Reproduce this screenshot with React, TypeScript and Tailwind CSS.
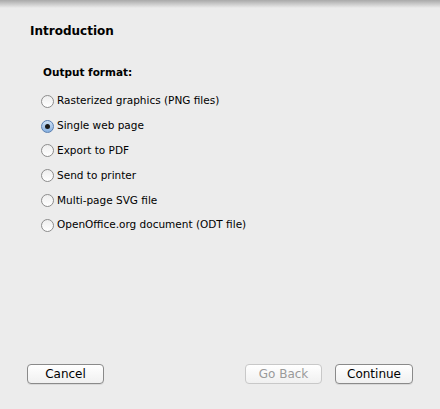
import React, { useState } from 'react';

const OPTIONS = [
  'Rasterized graphics (PNG files)',
  'Single web page',
  'Export to PDF',
  'Send to printer',
  'Multi-page SVG file',
  'OpenOffice.org document (ODT file)',
];

const Radio: React.FC<{ checked: boolean }> = ({ checked }) => (
  <span
    className={
      'w-[13px] h-[13px] rounded-full border flex items-center justify-center shrink-0 ' +
      (checked
        ? 'border-[#5a7fb0] bg-gradient-to-b from-[#cfe1f5] to-[#86b0e0]'
        : 'border-[#8c8c8c] bg-gradient-to-b from-[#eeeeee] to-[#ffffff]')
    }
  >
    {checked && <span className="w-[5px] h-[5px] rounded-full bg-[#1a1a1a]" />}
  </span>
);

const Button: React.FC<{ label: string; disabled?: boolean; className?: string }> = ({ label, disabled, className }) => (
  <button
    className={
      'h-[20px] rounded-[4px] border text-[12px] leading-none bg-gradient-to-b from-white to-[#f0f0f0] ' +
      (disabled ? 'border-[#c8c8c8] text-[#9a9a9a]' : 'border-[#8a8a8a] text-black shadow-[0_1px_0_rgba(0,0,0,0.08)]') +
      ' ' + (className ?? '')
    }
  >
    {label}
  </button>
);

export default function App() {
  const [selected] = useState(1);
  return (
    <div
      className="w-[440px] h-[409px] bg-[#ececec] flex flex-col relative"
      style={{ fontFamily: '"DejaVu Sans", "Liberation Sans", sans-serif' }}
    >
      <div className="absolute top-0 left-0 right-0 h-[8px] bg-gradient-to-b from-[#a9a9a9] to-[#ececec]" />
      <div className="pl-[30px] pt-[22px] text-[12px] font-bold text-black">Introduction</div>
      <div className="pl-[43px] pt-[25px] text-[10.5px] font-bold text-black">Output format:</div>
      <div className="pl-[41px] pt-[14px] flex flex-col gap-[11.8px]">
        {OPTIONS.map((opt, i) => (
          <label key={opt} className="flex items-center gap-[3px] text-[10.5px] text-black h-[13px]">
            <Radio checked={i === selected} />
            <span>{opt}</span>
          </label>
        ))}
      </div>
      <div className="mt-auto mb-[25px] pl-[27px] pr-[27px] flex items-center">
        <Button label="Cancel" className="w-[77px]" />
        <div className="flex-1" />
        <Button label="Go Back" disabled className="w-[77px] ml-[1px]" />
        <Button label="Continue" className="w-[78px] ml-[13px]" />
      </div>
    </div>
  );
}
